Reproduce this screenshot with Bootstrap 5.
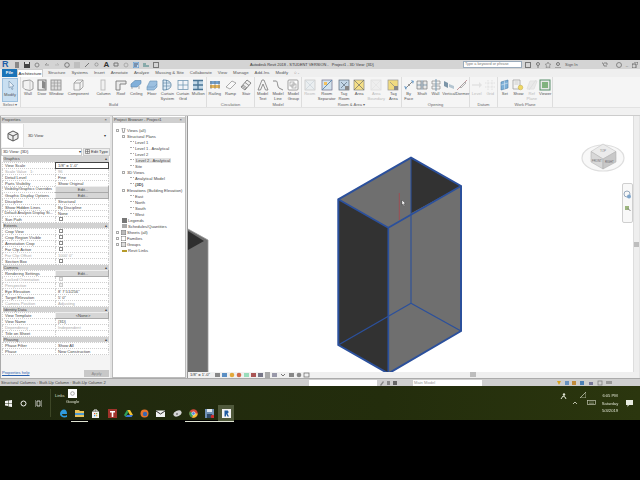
<!DOCTYPE html>
<html lang="en">
<head>
<meta charset="UTF-8">
<title>Autodesk Revit 2018 - Project1 - 3D View: {3D}</title>
<link href="https://cdn.jsdelivr.net/npm/bootstrap@5.3.3/dist/css/bootstrap.min.css" rel="stylesheet">
<script src="https://cdn.jsdelivr.net/npm/bootstrap@5.3.3/dist/js/bootstrap.bundle.min.js" defer></script>
<style>
  html, body { margin: 0; background: #000; overflow: hidden; }
  body { font-family: "Liberation Sans", Arial, sans-serif; font-size: 4.1px; line-height: 6px; color: #333; }
  .screen { width: 640px; height: 480px; filter: blur(.4px); }
  .blackbar { height: 60px; background: #000; flex: none; }
  .title-row { height: 9px; background: #d4d4d4; flex: none; color: #555; }
  .qat-icon { width: 6px; height: 6px; margin-right: 4px; flex: none; }
  .rlogo { color: #1f5fa8; font-size: 9px; font-weight: 700; margin: 0 5px 0 2px; line-height: 9px; }
  .title-glyph { font-size: 8px; font-weight: 700; line-height: 9px; color: #333; margin-right: 4px; }
  .title-text { position: absolute; left: 250px; top: 60px; font-size: 3.9px; line-height: 9px; white-space: nowrap; }
  .search-box { position: absolute; left: 463px; top: 61px; width: 59px; height: 7px; background: #fff; border: 1px solid #9ab; color: #777; font-size: 3.8px; line-height: 5px; padding-left: 1px; white-space: nowrap; }
  .title-tools { position: absolute; left: 525px; top: 60px; height: 9px; width: 112px; color: #555; white-space: nowrap; }
  .tab-row { height: 8px; background: #efefef; flex: none; padding-left: 2px; font-size: 4.3px; }
  .tab-file { width: 15px; height: 8px; background: #1a74b8; color: #fff; font-weight: 700; text-align: center; line-height: 8px; }
  .tab-item { padding: 0 3px; line-height: 8px; color: #555; white-space: nowrap; }
  .tab-on { background: #fff; color: #222; width: 26px; text-align: center; border: 1px solid #ccc; border-bottom: 0; line-height: 7px; margin-right: 2px; white-space: nowrap; }
  .ribbon { height: 31px; background: #f5f5f5; border-bottom: 1px solid #e2e2e2; flex: none; }
  .rb-panel { border-right: 1px solid #ddd; flex: none; }
  .rb-select { width: 21px; } .rb-build { width: 186px; } .rb-circ { width: 48px; } .rb-model { width: 47px; }
  .rb-room { width: 100px; } .rb-open { width: 68px; } .rb-datum { width: 28px; } .rb-plane { width: 55px; }
  .rb-items { height: 25px; }
  .rb-item { flex: 1 1 0; text-align: center; padding-top: 2px; line-height: 4.6px; font-size: 4.1px; color: #555; min-width: 0; }
  .rb-item svg { width: 12px; height: 12px; display: block; margin: 0 auto 1px; opacity: .85; }
  .rb-wide { flex-grow: 2; } .rb-mid { flex-grow: 1.25; } .rb-tight { flex-grow: .9; }
  .rb-off { color: #bbb; }
  .rb-off svg { opacity: .45; }
  .rb-active { background: #c9dff1; border: 1px solid #9cc0de; margin: 1px 2px 0; padding-top: 1px; }
  .rb-label { height: 5px; text-align: center; font-size: 4.1px; line-height: 5px; color: #666; }
  .sub-strip { height: 8px; background: #f1f1f1; border-bottom: 1px solid #ccc; flex: none; }
  .workspace { height: 262px; flex: none; background: #e4e4e4; }
  .props { width: 110px; background: #f4f4f4; border-left: 1px solid #aaa; flex: none; }
  .pane-head { height: 6px; margin-top: 1px; background: #cfcfcf; line-height: 6px; padding: 0 3px 0 1px; color: #444; flex: none; }
  .type-thumb { height: 25px; flex: none; }
  .type-icon { width: 22px; height: 23px; background: #fff; border-right: 1px solid #e0e0e0; margin-left: 1px; }
  .type-select { height: 8px; flex: none; }
  .type-name { width: 81px; background: #fff; border: 1px solid #ccc; padding-left: 1px; line-height: 6px; }
  .edit-type { width: 27px; background: #eee; text-align: center; border: 1px solid #ccc; margin-left: 1px; line-height: 6px; white-space: nowrap; }
  .edit-type svg { width: 5px; height: 5px; vertical-align: -1px; margin-right: 1px; }
  .prop-table { width: 107px; margin-left: 1px; border-collapse: collapse; table-layout: fixed; background: #fff; }
  .prop-table td, .prop-table th { height: 6px; padding: 0 0 0 2px; font-weight: 400; line-height: 5px; white-space: nowrap; overflow: hidden; border: 1px dotted #cfcfcf; color: #444; font-size: 4.1px; }
  .prop-table td.lbl-fit { font-size: 3.8px; padding-left: 1.500px; }
  .prop-table .lbl { width: 52px; }
  .prop-table th { background: #d2d2d2; padding-left: 1px; border: 0; color: #444; }
  .prop-table .sec-arrow { float: right; margin-right: 2px; }
  .prop-table .muted-row td { color: #aaa; }
  .prop-table .btn-cell { background: #d6d6d6; text-align: center; border: 1px solid #aaa; border-top-color: #eee; border-left-color: #eee; }
  .prop-table .input-cell { border: 1px solid #444; }
  .chk { display: block; width: 4px; height: 4px; border: 1px solid #888; background: #fff; margin-left: 1px; }
  .chk-off { border-color: #ccc; background: #eee; }
  .props-foot { height: 10px; padding: 0 1px; }
  .help-link { color: #2a62b0; text-decoration: underline; }
  .apply-btn { width: 25px; height: 7px; background: #c8c8c8; color: #888; text-align: center; line-height: 7px; }
  .browser { width: 74px; margin-left: 2px; background: #fff; border: 1px solid #bbb; border-top: 0; flex: none; }
  .tree { padding-top: 5px; padding-left: 1px; }
  .tree-row { height: 6px; line-height: 6px; white-space: nowrap; color: #444; padding-left: 2px; }
  .tree-row i { display: inline-block; width: 3px; height: 3px; border: 1px solid #aaa; margin-right: 2px; vertical-align: 0; }
  .tree-row svg { width: 5px; height: 5px; margin-right: 1px; vertical-align: -1px; }
  .lv1 { padding-left: 8px; } .lv2 { padding-left: 16px; }
  .lv2::before { content: ""; display: inline-block; width: 4px; margin-right: 1px; border-top: 1px dotted #aaa; vertical-align: 2px; }
  .tree-sel { background: #e2e2e2; padding: 0 1px; }
  .tree-cur { font-weight: 700; }
  .canvas-wrap { width: 452px; margin-left: 1px; background: #fff; border-left: 1px solid #999; flex: none; }
  .viewport { height: 256px; flex: none; }
  .drawing { width: 445px; height: 256px; display: block; }
  .vscroll { width: 6px; background: #eee; border-left: 1px solid #ddd; flex: none; }
  .vthumb { position: absolute; right: 0; top: 126px; width: 5px; height: 5px; background: #bdbdbd; }
  .bottom-row { height: 6px; flex: none; background: #efefef; }
  .view-ctl { width: 132px; background: #f1f1f1; line-height: 6px; padding-left: 2px; flex: none; white-space: nowrap; }
  .view-ctl svg { width: 98px; height: 6px; margin-left: 5px; }
  .hthumb { position: absolute; left: 150px; top: 0; width: 6px; height: 5px; background: #bdbdbd; }
  .status-row { height: 8px; background: #cfcfcf; flex: none; line-height: 8px; color: #444; padding-left: 1px; border-top: 1px solid #aaa; }
  .status-field { background: #fff; height: 6px; line-height: 6px; color: #999; padding-left: 1px; }
  .field-sel { position: absolute; left: 309px; top: 1px; width: 68px; }
  .field-model { position: absolute; left: 413px; top: 1px; width: 69px; }
  .status-icons { position: absolute; left: 379px; top: 1px; }
  .status-tray { position: absolute; left: 556px; top: 1px; }
  .taskbar { height: 34px; flex: none; background: linear-gradient(90deg, #20280f, #232d0c 60%, #2b360e); color: #dfe3d2; font-size: 4.1px; }
  .start-col { width: 50px; padding-left: 5px; flex: none; }
  .task-divider { width: 1px; margin: 3px 0; background: #3d4626; flex: none; }
  .links-label { margin-left: 4px; width: 11px; padding-top: 7px; }
  .google-tile { width: 13px; text-align: center; padding-top: 3px; }
  .tile-doc { width: 9px; height: 9px; background: #fff; margin: 0 auto 1px; }
  .pinned { height: 17px; padding-left: 4px; }
  .pin { width: 16.300px; height: 17px; flex: none; text-align: center; padding-top: 4px; }
  .pin svg { width: 9px; height: 9px; display: block; margin: 0 auto; }
  .pin-open { border-bottom: 1px solid #dfe3d2; }
  .pin-active { background: #505a3c; }
  .tray { position: absolute; right: 0; top: 0; height: 34px; }
  .clock { position: absolute; left: 93px; top: 6px; width: 22px; text-align: center; line-height: 7.500px; }
  .tray-icon { position: absolute; }
  .tray-net { left: 54px; top: 7px; } .tray-up { left: 66px; top: 14px; }
  .tray-sig { left: 74px; top: 6px; } .tray-key { left: 81px; top: 14px; }
  .tray-note { left: 120px; top: 14px; }
  .tray-box { width: 134px; }
</style>
</head>
<body>
<svg width="0" height="0" class="position-absolute">
  <defs>
    <symbol id="i-modify" viewBox="0 0 12 12"><path d="M5 1l5 5-2.200.3L9 9l-1 .6-1.200-2.800L5 8z" fill="#eef4fa" stroke="#6c8aa6" stroke-width=".7"/></symbol>
    <symbol id="i-wall" viewBox="0 0 12 12"><path d="M1 2l7-1 3 2v7l-3 1.500-5-1-2-2z" fill="#f2f2f2" stroke="#777" stroke-width=".8"/><path d="M8 1v10.500" stroke="#aaa" stroke-width=".7"/></symbol>
    <symbol id="i-door" viewBox="0 0 12 12"><rect x="2" y="1" width="8" height="10" fill="#eee" stroke="#666"/><path d="M6 1.500l3.500 1.500v7L6 9z" fill="#777"/></symbol>
    <symbol id="i-window" viewBox="0 0 12 12"><rect x="1" y="1" width="10" height="10" fill="#d9d9d9" stroke="#888"/><path d="M1 4h10M1 7h10M4.300 1v10M7.600 1v10" stroke="#8d8d8d" stroke-width=".7"/></symbol>
    <symbol id="i-comp" viewBox="0 0 12 12"><path d="M2 4l3-3h6v7l-3 3H2zM2 4h6v7M8 4l3-3" fill="#f4f4f4" stroke="#888" stroke-width=".8"/></symbol>
    <symbol id="i-column" viewBox="0 0 12 12"><rect x="4" y="1" width="4" height="10" fill="#f1f1f1" stroke="#aaa" stroke-width=".8"/></symbol>
    <symbol id="i-roof" viewBox="0 0 12 12"><path d="M1 2h10v3H5v6H1z" fill="#e8e8e8" stroke="#666" stroke-width=".9"/></symbol>
    <symbol id="i-ceiling" viewBox="0 0 12 12"><path d="M1 5l4-3.500h6v3L7 8H1z" fill="#6fa5d6" stroke="#3d6f9e" stroke-width=".6"/><path d="M2 10v-2M9 7v3" stroke="#888" stroke-width=".8"/></symbol>
    <symbol id="i-floor" viewBox="0 0 12 12"><path d="M1 8l3-6h7v6l-3 3H1z" fill="#8db7dd" stroke="#4f7faa" stroke-width=".6"/><path d="M1 8h7l3-3" stroke="#4f7faa" stroke-width=".5" fill="none"/></symbol>
    <symbol id="i-csys" viewBox="0 0 12 12"><path d="M2 1c4 0 8 1 8 5s-4 5-8 5z" fill="#d6e6f3" stroke="#3f7195" stroke-width=".9"/><path d="M2 4h7M2 7h7M5.500 1v10" stroke="#3f7195" stroke-width=".6"/></symbol>
    <symbol id="i-cgrid" viewBox="0 0 12 12"><rect x="1" y="1.500" width="10" height="9" fill="#f2f6fa" stroke="#5e8aa8" stroke-width=".8"/><path d="M1 6h10M6 1.500v9" stroke="#5e8aa8" stroke-width=".8"/></symbol>
    <symbol id="i-mull" viewBox="0 0 12 12"><rect x="1" y="1.500" width="10" height="9" fill="#b9d3e6"/><path d="M1 6h10M6 1.500v9M1 1.500h10M1 10.500h10" stroke="#2e6186" stroke-width="1.300"/></symbol>
    <symbol id="i-rail" viewBox="0 0 12 12"><path d="M1 2h10v3H1z" fill="#5a93c9"/><path d="M1 6h10v3H1z" fill="#e3a93a"/><path d="M2 2v8M6 2v8M10 2v8" stroke="#555" stroke-width=".6"/></symbol>
    <symbol id="i-ramp" viewBox="0 0 12 12"><path d="M1 8l6-6 4 2-6 6z" fill="#fafafa" stroke="#888" stroke-width=".8"/></symbol>
    <symbol id="i-stair" viewBox="0 0 12 12"><path d="M1 8l6-7 4 3-6 7z" fill="#eee" stroke="#555" stroke-width=".8"/><path d="M3 6l4 3M5 3.500l4 3M2 7l4 3" stroke="#555" stroke-width=".7"/></symbol>
    <symbol id="i-mtext" viewBox="0 0 12 12"><path d="M1 11l4-10h2l4 10h-2.500L6 5l-2.500 6z" fill="#f4f4f4" stroke="#666" stroke-width=".8"/></symbol>
    <symbol id="i-mline" viewBox="0 0 12 12"><path d="M1 2h3c2 0 1 5 3 7l4 2" fill="none" stroke="#777"/></symbol>
    <symbol id="i-mgroup" viewBox="0 0 12 12"><rect x="1" y="1" width="10" height="10" rx="1" fill="#fff" stroke="#777" stroke-width=".8"/><rect x="3" y="3" width="4" height="4" fill="none" stroke="#888" stroke-width=".7"/><rect x="5" y="5" width="4" height="4" fill="none" stroke="#888" stroke-width=".7"/></symbol>
    <symbol id="i-room" viewBox="0 0 12 12"><rect x="1" y="1" width="10" height="10" fill="#dde6ec" stroke="#888" stroke-width=".7"/><path d="M2 10L10 2M2 2l8 8" stroke="#9ab" stroke-width=".7"/></symbol>
    <symbol id="i-rsep" viewBox="0 0 12 12"><rect x="1" y="1" width="10" height="10" fill="#cfe0ec" stroke="#557" stroke-width=".7"/><path d="M1 11L11 1" stroke="#4d7ea8"/><path d="M3 3h3v3H3z" fill="#f4b942"/></symbol>
    <symbol id="i-troom" viewBox="0 0 12 12"><rect x="1" y="1" width="10" height="10" fill="#bcd3e6" stroke="#456" stroke-width=".7"/><path d="M3 3l6 6M9 3L3 9" stroke="#456" stroke-width=".7"/><rect x="7" y="7" width="4" height="4" fill="#777"/></symbol>
    <symbol id="i-area" viewBox="0 0 12 12"><rect x="1" y="1" width="10" height="10" fill="#f5dc74" stroke="#777" stroke-width=".7"/><path d="M1 1l10 10M11 1L1 11" stroke="#555" stroke-width=".7"/></symbol>
    <symbol id="i-aoff" viewBox="0 0 12 12"><rect x="1" y="1" width="10" height="10" fill="#e6e6e6" stroke="#bbb" stroke-width=".7"/><path d="M1 1l10 10M11 1L1 11" stroke="#ccc" stroke-width=".7"/></symbol>
    <symbol id="i-tarea" viewBox="0 0 12 12"><rect x="1" y="1" width="10" height="10" fill="#f1d76c" stroke="#888" stroke-width=".7"/><path d="M3 3l6 6" stroke="#777" stroke-width=".7"/><rect x="7" y="7" width="4" height="4" fill="#777"/></symbol>
    <symbol id="i-byface" viewBox="0 0 12 12"><path d="M2 10L10 2" stroke="#777"/><path d="M1 7l3 1-1 3zM8 1l3 1-1 3z" fill="#5e93c4"/><circle cx="6" cy="6" r="1" fill="#777"/></symbol>
    <symbol id="i-shaft" viewBox="0 0 12 12"><path d="M1 2h4v8H1zM7 2h4v8H7z" fill="#e7e7e7" stroke="#666" stroke-width=".7"/><path d="M6 1v10M1 6h4M7 6h4" stroke="#46708f" stroke-width=".7"/></symbol>
    <symbol id="i-wopen" viewBox="0 0 12 12"><path d="M2 2h8v3H2zM2 7h8v3H2z" fill="#f3f3f3" stroke="#777" stroke-width=".7"/><path d="M6 0v12" stroke="#5e8aa8"/></symbol>
    <symbol id="i-vert" viewBox="0 0 12 12"><path d="M1 2l4 2v5L1 7z" fill="#68859b"/><path d="M6 5l5 2v3L6 8z" fill="#a9bdcb"/></symbol>
    <symbol id="i-dormer" viewBox="0 0 12 12"><path d="M1 11L9 3l2-2" stroke="#b8878d" fill="none"/><path d="M4 8l5-5 1 1-5 5z" fill="#eee" stroke="#777" stroke-width=".6"/></symbol>
    <symbol id="i-level" viewBox="0 0 12 12"><path d="M1 6h7" stroke="#bbb"/><path d="M8 3l3 3-3 3z" fill="#ccc"/></symbol>
    <symbol id="i-grid" viewBox="0 0 12 12"><path d="M1 4h10M1 8h10M4 1v10M8 1v10" stroke="#ccc" stroke-dasharray="1 .5"/></symbol>
    <symbol id="i-set" viewBox="0 0 12 12"><path d="M2 3l7-2v8l-7 2z" fill="#6aa5d4" stroke="#2f6a9b" stroke-width=".6"/><path d="M2 6l7-2M5.500 2v8" stroke="#e6f0f7" stroke-width=".5"/></symbol>
    <symbol id="i-show" viewBox="0 0 12 12"><path d="M1 1h7v9H1z" fill="#f4f4f4" stroke="#888" stroke-width=".7"/><path d="M2.500 3h4M2.500 5h4" stroke="#aaa" stroke-width=".6"/><circle cx="8.500" cy="8.500" r="2.300" fill="#efd24a" stroke="#b49a24" stroke-width=".5"/></symbol>
    <symbol id="i-ref" viewBox="0 0 12 12"><path d="M1 10l3-8h7l-3 8z" fill="#dcdcdc" stroke="#ccc"/><path d="M10 1L3 11" stroke="#c6c6c6"/></symbol>
    <symbol id="i-viewer" viewBox="0 0 12 12"><rect x="1" y="1" width="10" height="10" fill="#e6e6e6" stroke="#3e7f52"/><rect x="3" y="3" width="6" height="6" fill="#6ea76c"/></symbol>
  </defs>
</svg>

<div class="screen d-flex flex-column position-relative">
  <div class="blackbar"></div>

  <!-- title bar -->
  <div class="title-row d-flex align-items-center">
    <span class="rlogo">R</span>
    <svg class="qat-icon" viewBox="0 0 6 6"><path d="M1 0h4v6H1z" fill="#888"/></svg>
    <svg class="qat-icon" viewBox="0 0 6 6"><path d="M0 0h6v6H0z" fill="#444"/><path d="M1 0h4v2H1z" fill="#ddd"/></svg>
    <svg class="qat-icon" viewBox="0 0 6 6"><circle cx="3" cy="3" r="2" fill="none" stroke="#888"/></svg>
    <svg class="qat-icon" viewBox="0 0 6 6"><path d="M1 3h4M1 3l2-2" stroke="#999" fill="none"/></svg>
    <svg class="qat-icon" viewBox="0 0 6 6"><path d="M1 3h4M5 3L3 1" stroke="#bbb" fill="none"/></svg>
    <svg class="qat-icon" viewBox="0 0 6 6"><circle cx="3" cy="3" r="2.300" fill="none" stroke="#666" stroke-width=".8"/></svg>
    <svg class="qat-icon" viewBox="0 0 6 6"><path d="M0 1h6M0 3h6M0 5h6" stroke="#aaa"/></svg>
    <svg class="qat-icon" viewBox="0 0 6 6"><path d="M1 5l4-4" stroke="#777"/></svg>
    <svg class="qat-icon" viewBox="0 0 6 6"><circle cx="2.500" cy="2.500" r="1.600" fill="none" stroke="#888" stroke-width=".7"/></svg>
    <span class="title-glyph">A</span>
    <svg class="qat-icon" viewBox="0 0 6 6"><path d="M1 1h4v3H1z" fill="none" stroke="#777"/></svg>
    <svg class="qat-icon" viewBox="0 0 6 6"><circle cx="3" cy="3" r="2" fill="none" stroke="#aaa"/></svg>
    <svg class="qat-icon" viewBox="0 0 6 6"><rect width="6" height="6" fill="#c3dcf0" stroke="#5a93c9"/><path d="M1 2h4M1 4h3" stroke="#346"/></svg>
    <svg class="qat-icon" viewBox="0 0 6 6"><path d="M0 1h3v4H0zM3 3h3v2H3z" fill="#8aa"/></svg>
    <svg class="qat-icon" viewBox="0 0 6 6"><rect x=".5" y=".5" width="5" height="5" fill="none" stroke="#777"/></svg>
  </div>
  <div class="title-text">Autodesk Revit 2018 - STUDENT VERSION -&nbsp;&nbsp; Project1 - 3D View: {3D}</div>
  <div class="search-box">Type a keyword or phrase</div>
  <div class="title-tools d-flex align-items-center">
    <svg class="qat-icon" viewBox="0 0 6 6"><rect x=".5" y=".5" width="5" height="5" fill="none" stroke="#777"/></svg>
    <svg class="qat-icon" viewBox="0 0 6 6"><circle cx="3" cy="2" r="1.500" fill="none" stroke="#777"/><path d="M3 4v2" stroke="#777"/></svg>
    <svg class="qat-icon" viewBox="0 0 6 6"><path d="M3 0l1 2 2 .3-1.500 1.500.4 2L3 5 1.100 5.800l.4-2L0 2.300 2 2z" fill="none" stroke="#777" stroke-width=".6"/></svg>
    <svg class="qat-icon me-1" viewBox="0 0 6 6"><circle cx="3" cy="2" r="1.500" fill="none" stroke="#777"/><path d="M0 6h6" stroke="#777"/></svg>
    <span>Sign In</span>
    <svg class="qat-icon ms-4" viewBox="0 0 6 6"><path d="M0 1h1l1 3h3M2 1h3v2" fill="none" stroke="#666" stroke-width=".7"/></svg>
    <svg class="qat-icon ms-1" viewBox="0 0 6 6"><circle cx="3" cy="3" r="2.500" fill="none" stroke="#666" stroke-width=".7"/></svg>
    <span class="ms-auto me-1">_</span>
    <svg class="qat-icon me-1" viewBox="0 0 6 6"><path d="M2 0h4v3M0 2h4v4H0z" fill="none" stroke="#555" stroke-width=".8"/></svg>
    <svg class="qat-icon m-0" viewBox="0 0 6 6"><path d="M1 1l4 4M5 1L1 5" stroke="#333"/></svg>
  </div>

  <!-- tabs -->
  <div class="tab-row d-flex">
    <div class="tab-file">File</div>
    <div class="tab-on">Architecture</div>
    <div class="tab-item">Structure</div>
    <div class="tab-item">Systems</div>
    <div class="tab-item">Insert</div>
    <div class="tab-item">Annotate</div>
    <div class="tab-item">Analyze</div>
    <div class="tab-item">Massing &amp; Site</div>
    <div class="tab-item">Collaborate</div>
    <div class="tab-item">View</div>
    <div class="tab-item">Manage</div>
    <div class="tab-item">Add-Ins</div>
    <div class="tab-item">Modify</div>
    <div class="tab-item">&#9675; -</div>
  </div>

  <!-- ribbon -->
  <div class="ribbon d-flex">
    <div class="rb-panel rb-select">
      <div class="rb-items d-flex">
        <div class="rb-item rb-active"><svg><use href="#i-modify"/></svg>Modify</div>
      </div>
      <div class="rb-label">Select &#9662;</div>
    </div>
    <div class="rb-panel rb-build">
      <div class="rb-items d-flex">
        <div class="rb-item rb-tight"><svg><use href="#i-wall"/></svg>Wall</div>
        <div class="rb-item rb-tight"><svg><use href="#i-door"/></svg>Door</div>
        <div class="rb-item rb-tight"><svg><use href="#i-window"/></svg>Window</div>
        <div class="rb-item rb-wide"><svg><use href="#i-comp"/></svg>Component</div>
        <div class="rb-item rb-mid"><svg><use href="#i-column"/></svg>Column</div>
        <div class="rb-item"><svg><use href="#i-roof"/></svg>Roof</div>
        <div class="rb-item"><svg><use href="#i-ceiling"/></svg>Ceiling</div>
        <div class="rb-item"><svg><use href="#i-floor"/></svg>Floor</div>
        <div class="rb-item"><svg><use href="#i-csys"/></svg>Curtain System</div>
        <div class="rb-item"><svg><use href="#i-cgrid"/></svg>Curtain Grid</div>
        <div class="rb-item"><svg><use href="#i-mull"/></svg>Mullion</div>
      </div>
      <div class="rb-label">Build</div>
    </div>
    <div class="rb-panel rb-circ">
      <div class="rb-items d-flex">
        <div class="rb-item"><svg><use href="#i-rail"/></svg>Railing</div>
        <div class="rb-item"><svg><use href="#i-ramp"/></svg>Ramp</div>
        <div class="rb-item"><svg><use href="#i-stair"/></svg>Stair</div>
      </div>
      <div class="rb-label">Circulation</div>
    </div>
    <div class="rb-panel rb-model">
      <div class="rb-items d-flex">
        <div class="rb-item"><svg><use href="#i-mtext"/></svg>Model Text</div>
        <div class="rb-item"><svg><use href="#i-mline"/></svg>Model Line</div>
        <div class="rb-item"><svg><use href="#i-mgroup"/></svg>Model Group</div>
      </div>
      <div class="rb-label">Model</div>
    </div>
    <div class="rb-panel rb-room">
      <div class="rb-items d-flex">
        <div class="rb-item rb-off"><svg><use href="#i-room"/></svg>Room</div>
        <div class="rb-item rb-mid"><svg><use href="#i-rsep"/></svg>Room Separator</div>
        <div class="rb-item"><svg><use href="#i-troom"/></svg>Tag Room</div>
        <div class="rb-item"><svg><use href="#i-area"/></svg>Area</div>
        <div class="rb-item rb-off rb-mid"><svg><use href="#i-aoff"/></svg>Area Boundary</div>
        <div class="rb-item"><svg><use href="#i-tarea"/></svg>Tag Area</div>
      </div>
      <div class="rb-label">Room &amp; Area &#9662;</div>
    </div>
    <div class="rb-panel rb-open">
      <div class="rb-items d-flex">
        <div class="rb-item"><svg><use href="#i-byface"/></svg>By Face</div>
        <div class="rb-item"><svg><use href="#i-shaft"/></svg>Shaft</div>
        <div class="rb-item"><svg><use href="#i-wopen"/></svg>Wall</div>
        <div class="rb-item"><svg><use href="#i-vert"/></svg>Vertical</div>
        <div class="rb-item"><svg><use href="#i-dormer"/></svg>Dormer</div>
      </div>
      <div class="rb-label">Opening</div>
    </div>
    <div class="rb-panel rb-datum">
      <div class="rb-items d-flex">
        <div class="rb-item rb-off"><svg><use href="#i-level"/></svg>Level</div>
        <div class="rb-item rb-off"><svg><use href="#i-grid"/></svg>Grid</div>
      </div>
      <div class="rb-label">Datum</div>
    </div>
    <div class="rb-panel rb-plane">
      <div class="rb-items d-flex">
        <div class="rb-item"><svg><use href="#i-set"/></svg>Set</div>
        <div class="rb-item"><svg><use href="#i-show"/></svg>Show</div>
        <div class="rb-item rb-off"><svg><use href="#i-ref"/></svg>Ref Plane</div>
        <div class="rb-item"><svg><use href="#i-viewer"/></svg>Viewer</div>
      </div>
      <div class="rb-label">Work Plane</div>
    </div>
  </div>
  <div class="sub-strip"></div>

  <div class="workspace d-flex">
    <!-- properties palette -->
    <div class="props d-flex flex-column">
      <div class="pane-head d-flex justify-content-between"><span>Properties</span><span>&#215;</span></div>
      <div class="type-thumb d-flex align-items-center">
        <div class="type-icon d-flex align-items-center justify-content-center">
          <svg width="12" height="12" viewBox="0 0 12 12"><path d="M6 1l5 2.500v5L6 11 1 8.500v-5z" fill="#eee" stroke="#555"/><path d="M1 3.500L6 6l5-2.500M6 6v5" stroke="#555" fill="none"/></svg>
        </div>
        <span class="ms-1 flex-grow-1">3D View</span>
        <span class="me-1">&#9662;</span>
      </div>
      <div class="type-select d-flex">
        <div class="type-name d-flex justify-content-between"><span>3D View: {3D}</span><span>&#9662;</span></div>
        <div class="edit-type"><svg viewBox="0 0 5 5"><path d="M.5.500h4v4h-4zM2.500.5v4M.5 2.500h4" fill="none" stroke="#666" stroke-width=".6"/></svg>Edit Type</div>
      </div>
      <table class="prop-table">
        <tr><th colspan="2">Graphics<span class="sec-arrow">&#9652;</span></th></tr>
        <tr><td class="lbl">View Scale</td><td class="input-cell">1/8" = 1'-0"</td></tr>
        <tr class="muted-row"><td>Scale Value&nbsp;&nbsp; 1:</td><td>96</td></tr>
        <tr><td>Detail Level</td><td>Fine</td></tr>
        <tr><td>Parts Visibility</td><td>Show Original</td></tr>
        <tr><td class="lbl-fit">Visibility/Graphics Overrides</td><td class="btn-cell">Edit...</td></tr>
        <tr><td>Graphic Display Options</td><td class="btn-cell">Edit...</td></tr>
        <tr><td>Discipline</td><td>Structural</td></tr>
        <tr><td>Show Hidden Lines</td><td>By Discipline</td></tr>
        <tr><td class="lbl-fit">Default Analysis Display St...</td><td>None</td></tr>
        <tr><td>Sun Path</td><td><span class="chk"></span></td></tr>
        <tr><th colspan="2">Extents<span class="sec-arrow">&#9652;</span></th></tr>
        <tr><td>Crop View</td><td><span class="chk"></span></td></tr>
        <tr><td>Crop Region Visible</td><td><span class="chk"></span></td></tr>
        <tr><td>Annotation Crop</td><td><span class="chk"></span></td></tr>
        <tr><td>Far Clip Active</td><td><span class="chk"></span></td></tr>
        <tr class="muted-row"><td>Far Clip Offset</td><td>1000' 0"</td></tr>
        <tr><td>Section Box</td><td><span class="chk"></span></td></tr>
        <tr><th colspan="2">Camera<span class="sec-arrow">&#9652;</span></th></tr>
        <tr><td>Rendering Settings</td><td class="btn-cell">Edit...</td></tr>
        <tr class="muted-row"><td>Locked Orientation</td><td><span class="chk chk-off"></span></td></tr>
        <tr class="muted-row"><td>Perspective</td><td><span class="chk chk-off"></span></td></tr>
        <tr><td>Eye Elevation</td><td>8' 7 51/256"</td></tr>
        <tr><td>Target Elevation</td><td>5' 0"</td></tr>
        <tr class="muted-row"><td>Camera Position</td><td>Adjusting</td></tr>
        <tr><th colspan="2">Identity Data<span class="sec-arrow">&#9652;</span></th></tr>
        <tr><td>View Template</td><td class="btn-cell">&lt;None&gt;</td></tr>
        <tr><td>View Name</td><td>{3D}</td></tr>
        <tr class="muted-row"><td>Dependency</td><td>Independent</td></tr>
        <tr><td>Title on Sheet</td><td></td></tr>
        <tr><th colspan="2">Phasing<span class="sec-arrow">&#9652;</span></th></tr>
        <tr><td>Phase Filter</td><td>Show All</td></tr>
        <tr><td>Phase</td><td>New Construction</td></tr>
      </table>
      <div class="props-foot mt-auto d-flex justify-content-between align-items-center">
        <a class="help-link" href="#">Properties help</a>
        <div class="apply-btn">Apply</div>
      </div>
    </div>

    <!-- project browser -->
    <div class="browser d-flex flex-column">
      <div class="pane-head d-flex justify-content-between"><span>Project Browser - Project1</span><span>&#215;</span></div>
      <div class="tree">
        <div class="tree-row"><i></i><svg viewBox="0 0 5 5"><path d="M1 0h3L3 5H2z" fill="none" stroke="#666" stroke-width=".6"/></svg>Views (all)</div>
        <div class="tree-row lv1"><i></i>Structural Plans</div>
        <div class="tree-row lv2">Level 1</div>
        <div class="tree-row lv2">Level 1 - Analytical</div>
        <div class="tree-row lv2">Level 2</div>
        <div class="tree-row lv2"><span class="tree-sel">Level 2 - Analytical</span></div>
        <div class="tree-row lv2">Site</div>
        <div class="tree-row lv1"><i></i>3D Views</div>
        <div class="tree-row lv2">Analytical Model</div>
        <div class="tree-row lv2"><span class="tree-cur">{3D}</span></div>
        <div class="tree-row lv1"><i></i>Elevations (Building Elevation)</div>
        <div class="tree-row lv2">East</div>
        <div class="tree-row lv2">North</div>
        <div class="tree-row lv2">South</div>
        <div class="tree-row lv2">West</div>
        <div class="tree-row lv1"><svg viewBox="0 0 5 5"><rect width="5" height="5" fill="#777"/></svg>Legends</div>
        <div class="tree-row lv1"><svg viewBox="0 0 5 5"><path d="M0 1h5M0 3h5" stroke="#555"/></svg>Schedules/Quantities</div>
        <div class="tree-row"><i></i><svg viewBox="0 0 5 5"><rect width="5" height="5" fill="#bbb" stroke="#666" stroke-width=".6"/></svg>Sheets (all)</div>
        <div class="tree-row"><i></i><svg viewBox="0 0 5 5"><rect width="5" height="5" fill="#fff" stroke="#555" stroke-width=".8"/></svg>Families</div>
        <div class="tree-row"><i></i><svg viewBox="0 0 5 5"><rect width="5" height="5" fill="#ddd" stroke="#555" stroke-width=".8"/></svg>Groups</div>
        <div class="tree-row lv1"><svg viewBox="0 0 5 5"><path d="M0 2h5v2H0z" fill="#b59a2a"/></svg>Revit Links</div>
      </div>
    </div>

    <!-- drawing area -->
    <div class="canvas-wrap d-flex flex-column">
      <div class="viewport d-flex position-relative">
        <svg class="drawing" viewBox="188 116 445 256">
          <!-- second column, cut off at the left edge -->
          <path d="M188 229l20 11v132h-20z" fill="#6e6e6e"/>
          <path d="M188 231l16 10-16 9z" fill="#2f2f2f"/>
          <path d="M188 229l20 11v132" fill="none" stroke="#9a9a9a" stroke-width=".8"/>
          <!-- selected column -->
          <path d="M338.300 199.300L411 157.700 461 186v145l-72.700 42.500-50-28.500z" fill="#6f6f6f"/>
          <path d="M338.300 199.300l50 28.400v145.800l-50-28.500z" fill="#323232"/>
          <path d="M411 157.700l50 28.300-50 27.300z" fill="#323232"/>
          <g fill="none" stroke="#2b509c">
            <path d="M411 157.700v145.600" stroke-width="1.100"/>
            <path d="M411 303.300l-72.700 41.700M411 303.300l50 27.700" stroke-width="1.300"/>
            <path d="M338.300 199.300L411 157.700 461 186v145l-72.700 42.500-50-28.500z" stroke-width="2"/>
            <path d="M338.300 199.300l50 28.400 72.700-41.700M388.300 227.700v145.800" stroke-width="1.700"/>
          </g>
          <path d="M399.300 193v27" stroke="#b04048" stroke-width=".7"/>
          <path d="M402 200l3.500 3.500-1.700.2 1 2.200-.8.400-1-2.200-1 1z" fill="#fff" stroke="#333" stroke-width=".4"/>
          <!-- view cube -->
          <ellipse cx="603" cy="158" rx="21" ry="13" fill="#f8f8f8" stroke="#dedede" stroke-width="1.200"/>
          <ellipse cx="603" cy="158" rx="13" ry="7" fill="#fff" stroke="#e8e8e8" stroke-width=".5"/>
          <path d="M603 144l13 7.500-13 7.500-12-7.500z" fill="#ebebeb" stroke="#bbb" stroke-width=".5"/>
          <path d="M591 151.500l12 7.500v10l-12-7z" fill="#d8d8d8" stroke="#aaa" stroke-width=".5"/>
          <path d="M616 151.500L603 159v10l13-7z" fill="#c8c8c8" stroke="#aaa" stroke-width=".5"/>
          <text x="600" y="152" font-size="3" fill="#888" font-family="Liberation Sans">TOP</text>
          <text x="592" y="162" font-size="2.800" fill="#666" font-family="Liberation Sans">FRONT</text>
          <text x="605" y="163" font-size="2.800" fill="#666" font-family="Liberation Sans">RIGHT</text>
          <!-- navigation bar -->
          <rect x="622.500" y="183.500" width="10" height="39" rx="1.500" fill="#f8f8f8" stroke="#cfcfcf"/>
          <circle cx="627" cy="194" r="3" fill="none" stroke="#97a9bd"/>
          <circle cx="629" cy="196.500" r="2" fill="#7ea5cb"/>
          <path d="M625 206h4v4h-4z" fill="#9db67f"/>
          <path d="M627.500 208l3 3" stroke="#888"/>
        </svg>
        <div class="vscroll position-relative"><div class="vthumb"></div></div>
      </div>
      <div class="bottom-row d-flex">
        <div class="view-ctl d-flex align-items-center"><span>1/8" = 1'-0"</span>
          <svg viewBox="0 0 98 6">
            <rect x="0" y="1" width="5" height="4" fill="#888"/><rect x="7" y="1" width="5" height="4" fill="#5b8fc4"/>
            <circle cx="17" cy="3" r="2.300" fill="#e3a93a"/><circle cx="24" cy="3" r="2.300" fill="#cf6a4d"/>
            <rect x="29" y="1" width="5" height="4" fill="#9db"/><rect x="36" y="1" width="5" height="4" fill="#a55"/>
            <rect x="43" y="1" width="5" height="4" fill="#778"/><rect x="50" y="0" width="5" height="6" fill="#aaa"/>
            <rect x="57" y="1" width="5" height="4" fill="#99a"/><path d="M66 2l2 2 2-2" stroke="#777" fill="none"/>
            <rect x="74" y="1" width="5" height="4" fill="#888"/><circle cx="84" cy="3" r="2.300" fill="#888"/>
            <rect x="89" y="1" width="5" height="4" fill="none" stroke="#666" stroke-width=".7"/>
          </svg>
        </div>
        <div class="flex-grow-1 position-relative"><div class="hthumb"></div></div>
      </div>
    </div>
  </div>

  <!-- status bar -->
  <div class="status-row position-relative">
    <span>Structural Columns : Built-Up Column : Built-Up Column 2</span>
    <div class="status-field field-sel"></div>
    <svg class="status-icons" width="18" height="6" viewBox="0 0 18 6"><path d="M1 5l3-4 1 1-3 4z" fill="#888"/><rect x="8" y="1" width="3" height="4" fill="#888"/><rect x="14" y="1" width="4" height="4" fill="#666"/></svg>
    <div class="status-field field-model">Main Model</div>
    <svg class="status-tray" width="60" height="6" viewBox="0 0 60 6"><path d="M1 1h4L3 5z" fill="#d9a520"/><rect x="9" y="1" width="4" height="4" fill="#6a93c0"/><rect x="16" y="1" width="4" height="4" fill="#c08a3a"/><rect x="24" y="1" width="4" height="4" fill="#4b7fb5"/><rect x="33" y="2" width="4" height="3" fill="#779"/><rect x="42" y="1" width="4" height="4" fill="none" stroke="#777" stroke-width=".7"/><path d="M50 1h6v3h-6z" fill="#999"/></svg>
  </div>

  <!-- windows taskbar -->
  <div class="taskbar d-flex position-relative">
    <div class="start-col d-flex align-items-center justify-content-between pe-2">
      <svg width="7" height="7" viewBox="0 0 7 7"><path d="M0 1l3-.5V3H0zM3.500.4L7 0v3H3.500zM0 3.500h3V6L0 5.600zM3.500 3.500H7V7l-3.500-.5z" fill="#f3f3f3"/></svg>
      <svg width="7" height="7" viewBox="0 0 7 7"><circle cx="3.500" cy="3.500" r="2.500" fill="none" stroke="#f3f3f3"/></svg>
      <svg width="7" height="7" viewBox="0 0 7 7"><path d="M0 0v7M7 0v7M2 1h3v5H2z" fill="none" stroke="#f3f3f3" stroke-width=".8"/></svg>
    </div>
    <div class="task-divider"></div>
    <div class="flex-grow-1 d-flex flex-column">
      <div class="d-flex links-row">
        <div class="links-label">Links</div>
        <div class="google-tile">
          <div class="tile-doc d-flex align-items-center justify-content-center">
            <svg width="5" height="5" viewBox="0 0 5 5"><circle cx="2.500" cy="2.500" r="1.800" fill="none" stroke="#888" stroke-width=".7"/></svg>
          </div>Google
        </div>
      </div>
      <div class="pinned d-flex mt-auto">
        <div class="pin"><svg viewBox="0 0 9 9"><path d="M1 5c0-3 2-4.500 4-4.500S8 2 8 5H3c0 2 3 2.500 5 1v2C5 9 1 8 1 5z" fill="#2f9be0"/></svg></div>
        <div class="pin pin-open"><svg viewBox="0 0 9 9"><path d="M0 1h4l1 1h4v6H0z" fill="#e8c35a"/><rect y="4" width="9" height="2" fill="#4d9ad0"/></svg></div>
        <div class="pin"><svg viewBox="0 0 9 9"><path d="M1 2.500h7V9H1z" fill="#f1f1f1"/><path d="M3 2.500V1h3v1.500" stroke="#f1f1f1" fill="none"/><path d="M3 4h1.300v1.300H3z" fill="#e25b2e"/><path d="M5 4h1.300v1.300H5z" fill="#7cb342"/><path d="M3 6h1.300v1.300H3z" fill="#2f9be0"/><path d="M5 6h1.300v1.300H5z" fill="#f2b632"/></svg></div>
        <div class="pin"><svg viewBox="0 0 9 9"><rect width="9" height="9" fill="#a0332b"/><path d="M2 2h5v1.500H5.300V8H3.700V3.500H2z" fill="#fff"/></svg></div>
        <div class="pin"><svg viewBox="0 0 9 9"><path d="M3 1h3l3 5H6z" fill="#f2c230"/><path d="M3 1L0 6l1.500 2L4.500 3z" fill="#2f9f57"/><path d="M1.500 8h6L9 6H3z" fill="#3c78d8"/></svg></div>
        <div class="pin"><svg viewBox="0 0 9 9"><circle cx="4.500" cy="4.500" r="4" fill="#e8742a"/><circle cx="5" cy="5" r="2.200" fill="#3b66b0"/></svg></div>
        <div class="pin"><svg viewBox="0 0 9 9"><rect y="1.500" width="9" height="6.500" fill="#f2f2f2"/><path d="M0 2l4.500 3L9 2" fill="none" stroke="#333"/></svg></div>
        <div class="pin"><svg viewBox="0 0 9 9"><ellipse cx="4.500" cy="4.500" rx="4.300" ry="2.800" fill="#d4d4d4" transform="rotate(-25 4.500 4.500)"/><circle cx="4" cy="5" r="1" fill="#777"/></svg></div>
        <div class="pin pin-open"><svg viewBox="0 0 9 9"><circle cx="4.500" cy="4.500" r="4.200" fill="#d64a3a"/><path d="M4.500 4.500L8.700 4.500A4.200 4.200 0 0 1 3 8.400z" fill="#f1c232"/><path d="M4.500 4.500L3 8.400A4.200 4.200 0 0 1 .8 2.500z" fill="#36a35a"/><circle cx="4.500" cy="4.500" r="1.700" fill="#4a86e0" stroke="#fff" stroke-width=".6"/></svg></div>
        <div class="pin pin-open"><svg viewBox="0 0 9 9"><rect width="9" height="9" fill="#6f8fb3"/><rect x="2" width="5" height="3" fill="#dfe7ef"/><rect x="2" y="5" width="5" height="4" fill="#2f4966"/><circle cx="7.500" cy="7.500" r="1.700" fill="#d02b2b"/></svg></div>
        <div class="pin pin-open pin-active"><svg viewBox="0 0 9 9"><rect width="9" height="9" fill="#f4f4f4"/><path d="M2.500 1.500h2.500c2 0 2 2.800.4 3L7 7.500H5.500L4 4.800v2.700H2.500z" fill="#1e5aa0"/></svg></div>
      </div>
    </div>
    <div class="tray tray-box">
      <svg class="tray-icon tray-net" width="7" height="7" viewBox="0 0 7 7"><circle cx="4" cy="1.500" r="1.200" fill="#dfe3d2"/><path d="M1 6l2-3 2 1 1 2" fill="none" stroke="#dfe3d2"/></svg>
      <svg class="tray-icon tray-up" width="6" height="5" viewBox="0 0 6 5"><path d="M1 4l2-2 2 2" fill="none" stroke="#dfe3d2" stroke-width=".8"/></svg>
      <svg class="tray-icon tray-sig" width="6" height="6" viewBox="0 0 6 6"><path d="M0 6h6V0z" fill="none" stroke="#bfc4b0" stroke-width=".8"/></svg>
      <svg class="tray-icon tray-key" width="9" height="5" viewBox="0 0 9 5"><rect x=".5" y=".5" width="8" height="4" fill="none" stroke="#bfc4b0" stroke-width=".7"/><path d="M2 2h5M2 3.500h5" stroke="#bfc4b0" stroke-width=".4"/></svg>
      <div class="clock">6:05 PM<br>Saturday<br>5/4/2019</div>
      <svg class="tray-icon tray-note" width="7" height="7" viewBox="0 0 7 7"><path d="M0 0h7v5H3L1.500 7V5H0z" fill="#e8ebe0"/></svg>
    </div>
  </div>

  <div class="blackbar"></div>
</div>
</body>
</html>
